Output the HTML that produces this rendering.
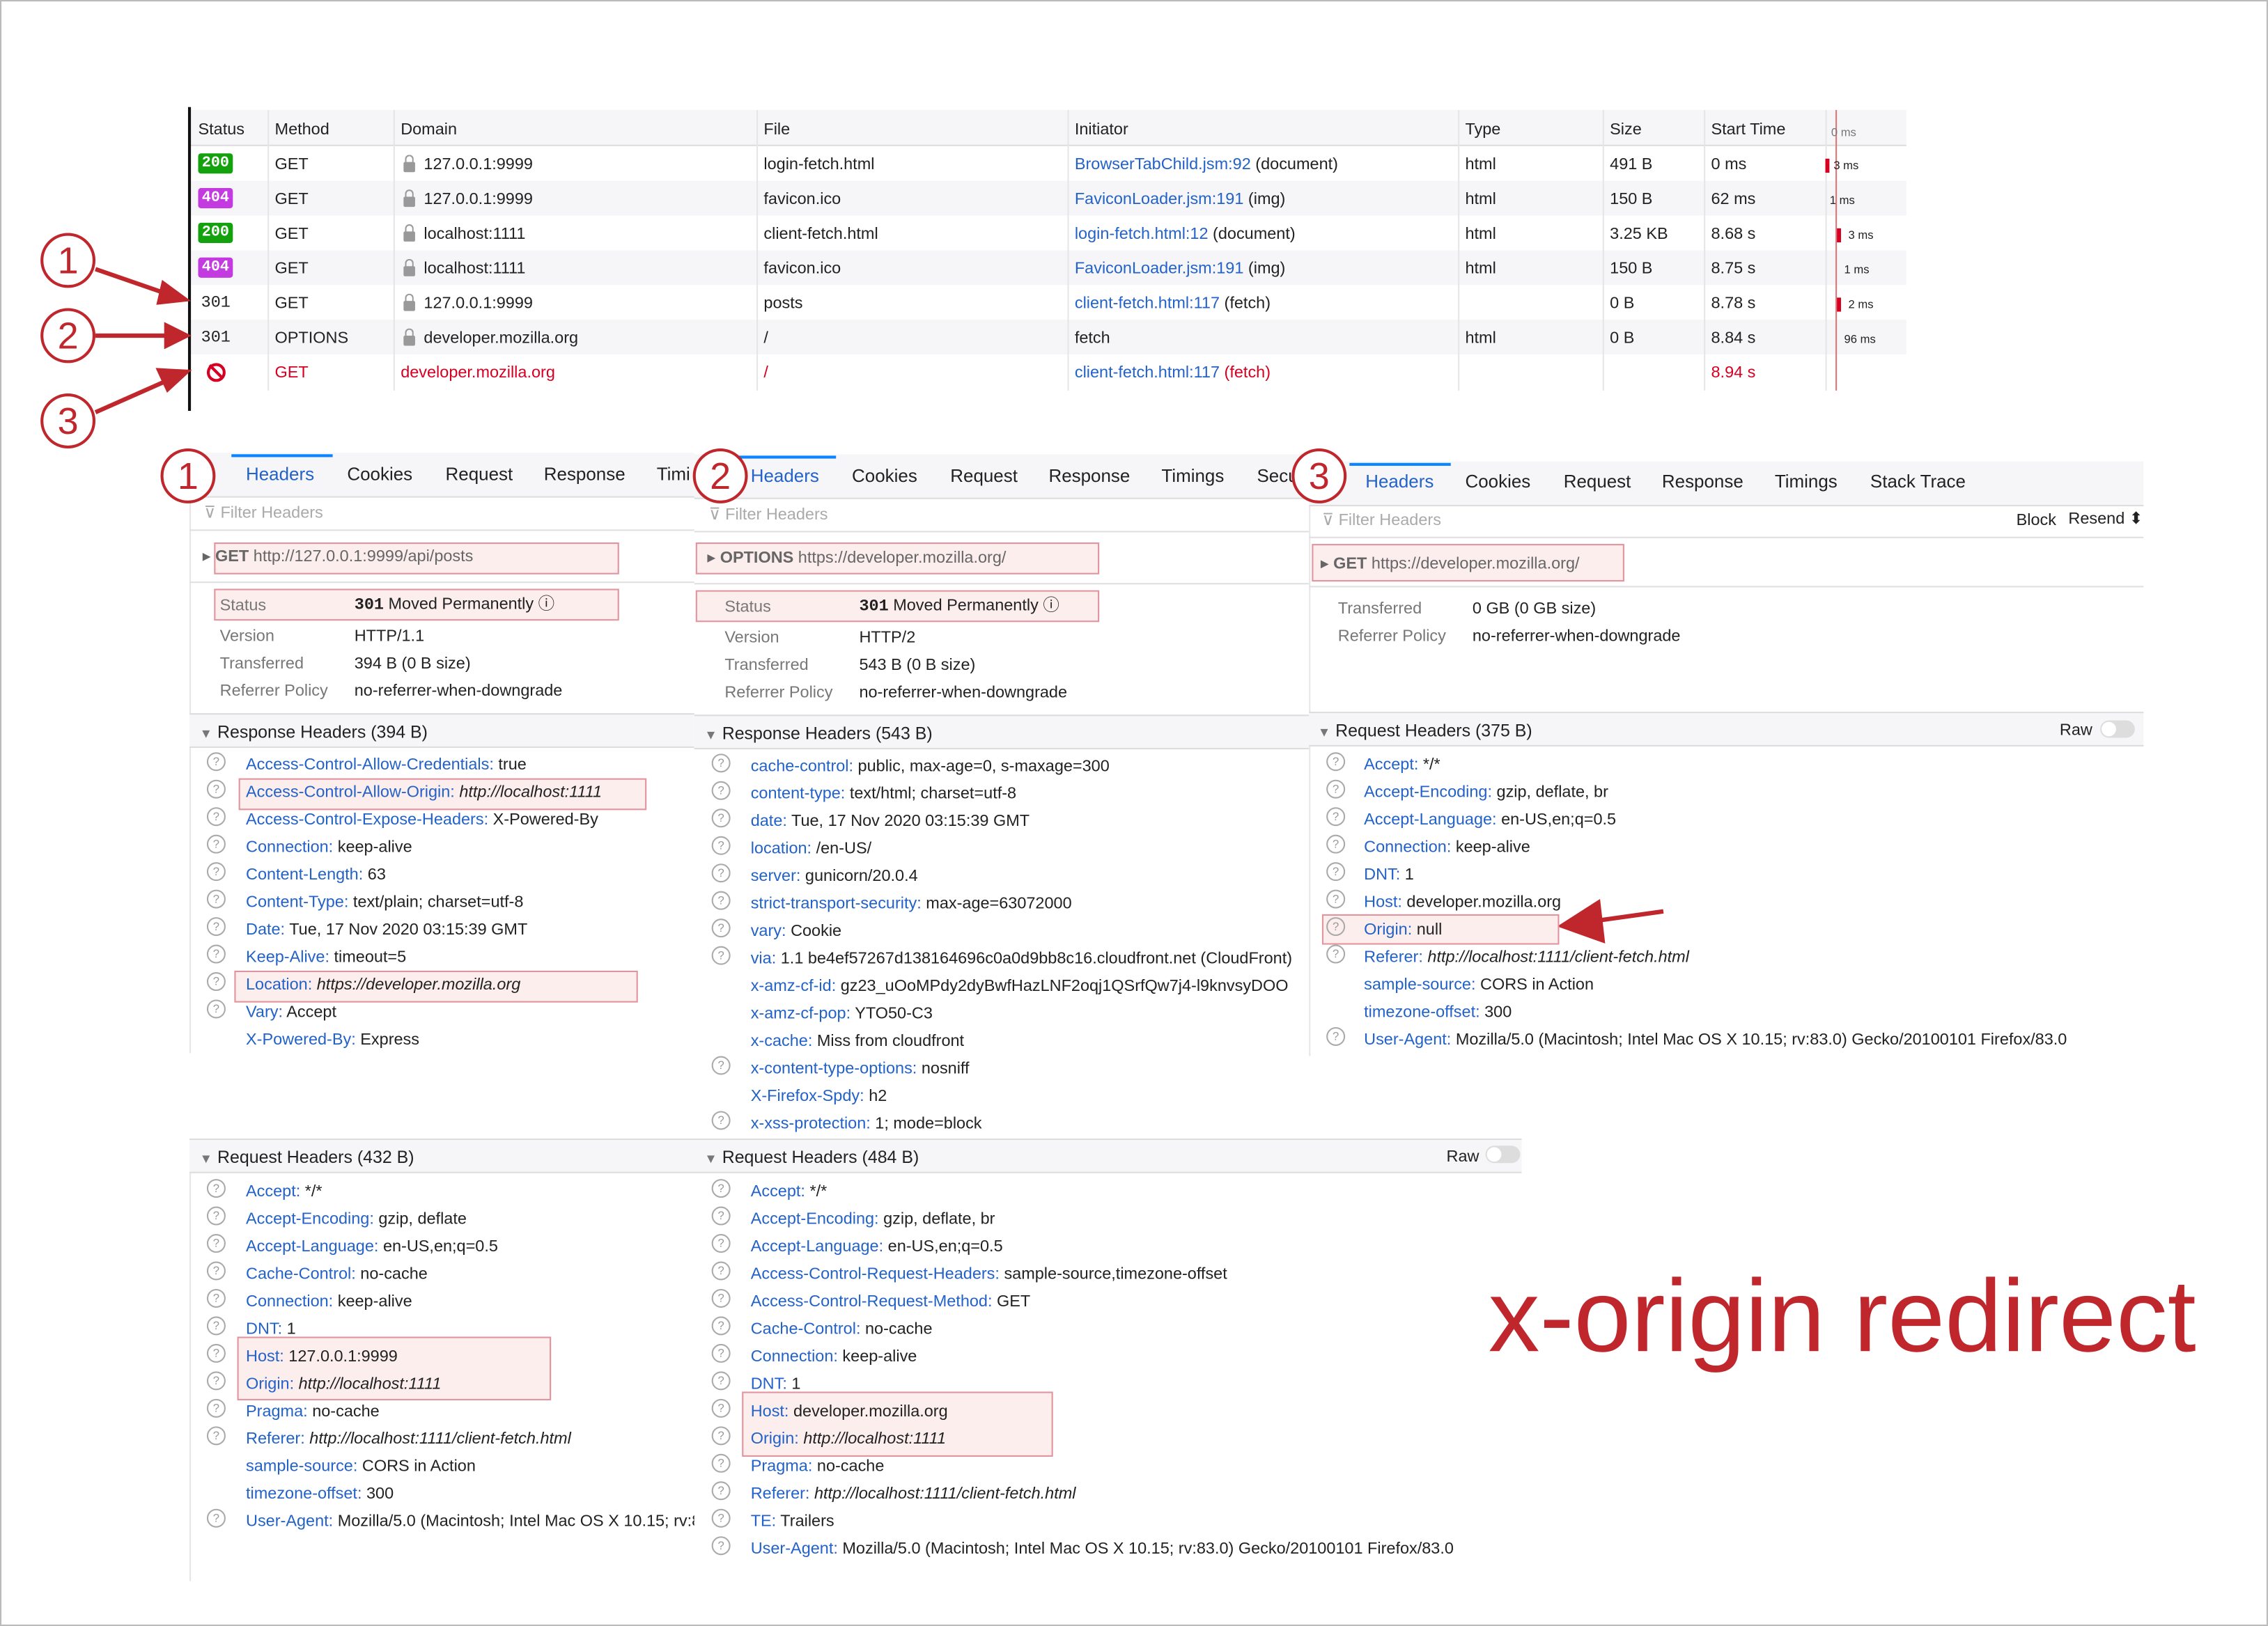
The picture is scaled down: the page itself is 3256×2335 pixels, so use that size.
<!DOCTYPE html>
<html><head><meta charset="utf-8">
<style>
html,body{margin:0;padding:0;background:#fff;overflow:hidden}
#wrap{position:absolute;left:0;top:0;width:1568px;height:1124px;transform-origin:0 0;transform:scale(2.0765,2.0774);font-family:"Liberation Sans",sans-serif;font-size:11.3px;color:#222;}
.t{position:absolute;white-space:nowrap;line-height:14px;margin-top:1px}
.k{color:#2362c8}
.g{color:#777}
.b{position:absolute;background:#fdeeee;border:1px solid #e2939d}
.r{position:absolute;left:131px;width:1187px;height:24px}
.q{position:absolute;width:11px;height:11px;border:1px solid #aaa;border-radius:50%;font-size:8px;line-height:11px;text-align:center;color:#999}
.tab{position:absolute;font-size:12.5px;white-space:nowrap}
.circ{position:absolute;width:34px;height:34px;border:2px solid #c0272d;border-radius:50%;background:#fff;color:#c0272d;font-size:26px;line-height:34px;text-align:center}
.hl{position:absolute;height:1px;background:#e0e0e2}
.vl{position:absolute;width:1px;background:#e6e6e8}
.badge{position:absolute;left:137px;width:24px;height:14px;border-radius:2px;color:#fff;font-family:"Liberation Mono",monospace;font-weight:bold;font-size:10.5px;line-height:14px;text-align:center}
.lock{position:absolute;width:8px;height:7px;background:#999;border-radius:1px}
.lock:before{content:"";position:absolute;left:1px;top:-5px;width:4px;height:5px;border:1px solid #999;border-bottom:none;border-radius:3px 3px 0 0}
</style></head><body><div id="wrap">
<div style="position:absolute;left:0;top:0;width:1566px;height:1122px;border:1px solid #bbb"></div>

<!-- network table -->
<div style="position:absolute;left:131px;top:76px;width:1187px;height:24px;background:#f6f6f8;border-bottom:1px solid #ddd"></div>
<div class="r" style="top:125px;background:#f6f6f8"></div>
<div class="r" style="top:173px;background:#f6f6f8"></div>
<div class="r" style="top:221px;background:#f6f6f8"></div>
<div class="vl" style="left:185px;top:76px;height:194px"></div>
<div class="vl" style="left:272px;top:76px;height:194px"></div>
<div class="vl" style="left:523px;top:76px;height:194px"></div>
<div class="vl" style="left:738px;top:76px;height:194px"></div>
<div class="vl" style="left:1008px;top:76px;height:194px"></div>
<div class="vl" style="left:1108px;top:76px;height:194px"></div>
<div class="vl" style="left:1178px;top:76px;height:194px"></div>
<div class="vl" style="left:1262px;top:76px;height:194px"></div>
<div style="position:absolute;left:1269px;top:76px;width:1px;height:194px;background:#d77"></div>
<div style="position:absolute;left:130px;top:74px;width:2px;height:210px;background:#111"></div>
<div class="t" style="left:137px;top:82px">Status</div><div class="t" style="left:190px;top:82px">Method</div><div class="t" style="left:277px;top:82px">Domain</div><div class="t" style="left:528px;top:82px">File</div><div class="t" style="left:743px;top:82px">Initiator</div><div class="t" style="left:1013px;top:82px">Type</div><div class="t" style="left:1113px;top:82px">Size</div><div class="t" style="left:1183px;top:82px">Start Time</div><div class="t g" style="left:1266px;top:84px;font-size:8px">0 ms</div>

<div class="badge" style="top:106px;background:#13a10e">200</div>
<div class="badge" style="top:130px;background:#c33ae0">404</div>
<div class="badge" style="top:154px;background:#13a10e">200</div>
<div class="badge" style="top:178px;background:#c33ae0">404</div>
<div class="t" style="left:139px;top:202px;font-family:'Liberation Mono',monospace">301</div>
<div class="t" style="left:139px;top:226px;font-family:'Liberation Mono',monospace">301</div>
<div style="position:absolute;left:143px;top:251px;width:9px;height:9px;border:2px solid #d70022;border-radius:50%"></div>
<div style="position:absolute;left:143px;top:256px;width:13px;height:2px;background:#d70022;transform:rotate(45deg)"></div>

<div class="t" style="left:190px;top:106px">GET</div><div class="t" style="left:190px;top:130px">GET</div><div class="t" style="left:190px;top:154px">GET</div><div class="t" style="left:190px;top:178px">GET</div><div class="t" style="left:190px;top:202px">GET</div><div class="t" style="left:190px;top:226px">OPTIONS</div><div class="t" style="left:190px;top:250px;color:#d70022">GET</div>
<div class="lock" style="left:279px;top:112px"></div><div class="lock" style="left:279px;top:136px"></div><div class="lock" style="left:279px;top:160px"></div><div class="lock" style="left:279px;top:184px"></div><div class="lock" style="left:279px;top:208px"></div><div class="lock" style="left:279px;top:232px"></div>
<div class="t" style="left:293px;top:106px">127.0.0.1:9999</div><div class="t" style="left:293px;top:130px">127.0.0.1:9999</div><div class="t" style="left:293px;top:154px">localhost:1111</div><div class="t" style="left:293px;top:178px">localhost:1111</div><div class="t" style="left:293px;top:202px">127.0.0.1:9999</div><div class="t" style="left:293px;top:226px">developer.mozilla.org</div><div class="t" style="left:277px;top:250px;color:#d70022">developer.mozilla.org</div>
<div class="t" style="left:528px;top:106px">login-fetch.html</div><div class="t" style="left:528px;top:130px">favicon.ico</div><div class="t" style="left:528px;top:154px">client-fetch.html</div><div class="t" style="left:528px;top:178px">favicon.ico</div><div class="t" style="left:528px;top:202px">posts</div><div class="t" style="left:528px;top:226px">/</div><div class="t" style="left:528px;top:250px;color:#d70022">/</div>
<div class="t" style="left:743px;top:106px"><span class="k">BrowserTabChild.jsm:92</span> (document)</div><div class="t" style="left:743px;top:130px"><span class="k">FaviconLoader.jsm:191</span> (img)</div><div class="t" style="left:743px;top:154px"><span class="k">login-fetch.html:12</span> (document)</div><div class="t" style="left:743px;top:178px"><span class="k">FaviconLoader.jsm:191</span> (img)</div><div class="t" style="left:743px;top:202px"><span class="k">client-fetch.html:117</span> (fetch)</div><div class="t" style="left:743px;top:226px">fetch</div><div class="t" style="left:743px;top:250px;color:#d70022"><span class="k">client-fetch.html:117</span> (fetch)</div>
<div class="t" style="left:1013px;top:106px">html</div><div class="t" style="left:1013px;top:130px">html</div><div class="t" style="left:1013px;top:154px">html</div><div class="t" style="left:1013px;top:178px">html</div><div class="t" style="left:1013px;top:226px">html</div>
<div class="t" style="left:1113px;top:106px">491 B</div><div class="t" style="left:1113px;top:130px">150 B</div><div class="t" style="left:1113px;top:154px">3.25 KB</div><div class="t" style="left:1113px;top:178px">150 B</div><div class="t" style="left:1113px;top:202px">0 B</div><div class="t" style="left:1113px;top:226px">0 B</div>
<div class="t" style="left:1183px;top:106px">0 ms</div><div class="t" style="left:1183px;top:130px">62 ms</div><div class="t" style="left:1183px;top:154px">8.68 s</div><div class="t" style="left:1183px;top:178px">8.75 s</div><div class="t" style="left:1183px;top:202px">8.78 s</div><div class="t" style="left:1183px;top:226px">8.84 s</div><div class="t" style="left:1183px;top:250px;color:#d70022">8.94 s</div>
<div class="t" style="left:1262px;top:107px;font-size:8px"><span style="color:#d70022">▌</span>3 ms</div><div class="t" style="left:1265px;top:131px;font-size:8px">1 ms</div><div class="t" style="left:1270px;top:155px;font-size:8px"><span style="color:#d70022">▌</span> 3 ms</div><div class="t" style="left:1275px;top:179px;font-size:8px">1 ms</div><div class="t" style="left:1270px;top:203px;font-size:8px"><span style="color:#d70022">▌</span> 2 ms</div><div class="t" style="left:1275px;top:227px;font-size:8px">96 ms</div>

<!-- annotation circles + arrows -->
<svg style="position:absolute;left:0;top:0" width="1568" height="1124">
<g stroke="#c0272d" stroke-width="3" fill="#c0272d">
<line x1="66" y1="186" x2="118" y2="204"/><polygon points="128,207 113,196 110,209"/>
<line x1="66" y1="232" x2="116" y2="232"/><polygon points="129,232 115,225 115,239"/>
<line x1="66" y1="285" x2="118" y2="262"/><polygon points="129,257 110,256 116,269"/>
<line x1="1150" y1="630" x2="1100" y2="637"/><polygon points="1080,640 1105,624 1108,650"/>
</g></svg>
<div class="circ" style="left:28px;top:161px">1</div>
<div class="circ" style="left:28px;top:213px">2</div>
<div class="circ" style="left:28px;top:272px">3</div>

<!-- panel backgrounds -->
<div style="position:absolute;left:131px;top:313px;width:349px;height:30px;background:#f6f6f8;border-bottom:1px solid #ddd"></div>
<div style="position:absolute;left:480px;top:314px;width:425px;height:30px;background:#f6f6f8;border-bottom:1px solid #ddd"></div>
<div style="position:absolute;left:905px;top:319px;width:577px;height:30px;background:#f6f6f8;border-bottom:1px solid #ddd"></div>
<div style="position:absolute;left:160px;top:314px;width:70px;height:2px;background:#0a84ff"></div>
<div style="position:absolute;left:510px;top:315px;width:68px;height:2px;background:#0a84ff"></div>
<div style="position:absolute;left:933px;top:320px;width:70px;height:2px;background:#0a84ff"></div>
<div class="vl" style="left:131px;top:313px;height:415px"></div>
<div class="vl" style="left:905px;top:350px;height:380px"></div>
<div class="vl" style="left:131px;top:788px;height:305px"></div>

<div class="tab k" style="left:170px;top:321px">Headers</div><div class="tab" style="left:240px;top:321px">Cookies</div><div class="tab" style="left:308px;top:321px">Request</div><div class="tab" style="left:376px;top:321px">Response</div><div class="tab" style="left:454px;top:321px">Timi</div>
<div class="tab k" style="left:519px;top:322px">Headers</div><div class="tab" style="left:589px;top:322px">Cookies</div><div class="tab" style="left:657px;top:322px">Request</div><div class="tab" style="left:725px;top:322px">Response</div><div class="tab" style="left:803px;top:322px">Timings</div><div class="tab" style="left:869px;top:322px">Secu</div>
<div class="tab k" style="left:944px;top:326px">Headers</div><div class="tab" style="left:1013px;top:326px">Cookies</div><div class="tab" style="left:1081px;top:326px">Request</div><div class="tab" style="left:1149px;top:326px">Response</div><div class="tab" style="left:1227px;top:326px">Timings</div><div class="tab" style="left:1293px;top:326px">Stack Trace</div>
<div class="circ" style="left:111px;top:310px">1</div>
<div class="circ" style="left:479px;top:310px">2</div>
<div class="circ" style="left:893px;top:310px">3</div>

<div class="t g" style="left:141px;top:347px;color:#aaa">⊽ Filter Headers</div>
<div class="t g" style="left:490px;top:348px;color:#aaa">⊽ Filter Headers</div>
<div class="t g" style="left:914px;top:352px;color:#aaa">⊽ Filter Headers</div>
<div class="t" style="left:1394px;top:352px">Block</div><div class="t" style="left:1430px;top:351px">Resend ⬍</div>
<div class="hl" style="left:131px;top:366px;width:349px"></div><div class="hl" style="left:480px;top:367px;width:425px"></div><div class="hl" style="left:905px;top:371px;width:577px"></div>

<!-- panel 1 summary -->
<div class="b" style="left:148px;top:375px;width:278px;height:20px"></div>
<div class="t" style="left:140px;top:377px;color:#666">▸ <b>GET</b> <span>http://127.0.0.1:9999/api/posts</span></div>
<div class="hl" style="left:131px;top:402px;width:349px"></div>
<div class="b" style="left:148px;top:407px;width:278px;height:20px"></div>
<div class="t g" style="left:152px;top:411px">Status</div><div class="t" style="left:245px;top:410px"><b style="font-family:'Liberation Mono',monospace">301</b> Moved Permanently ⓘ</div>
<div class="t g" style="left:152px;top:432px">Version</div><div class="t" style="left:245px;top:432px">HTTP/1.1</div>
<div class="t g" style="left:152px;top:451px">Transferred</div><div class="t" style="left:245px;top:451px">394 B (0 B size)</div>
<div class="t g" style="left:152px;top:470px">Referrer Policy</div><div class="t" style="left:245px;top:470px">no-referrer-when-downgrade</div>
<div style="position:absolute;left:131px;top:493px;width:349px;height:22px;background:#f6f6f8;border-top:1px solid #ddd;border-bottom:1px solid #ddd"></div>
<div class="t" style="left:138px;top:498px;font-size:12px"><span style="color:#777;font-size:9px">▼</span> Response Headers (394 B)</div>

<!-- panel 2 summary -->
<div class="b" style="left:481px;top:375px;width:277px;height:20px"></div>
<div class="t" style="left:489px;top:378px;color:#666">▸ <b>OPTIONS</b> https://developer.mozilla.org/</div>
<div class="hl" style="left:480px;top:403px;width:425px"></div>
<div class="b" style="left:481px;top:408px;width:277px;height:20px"></div>
<div class="t g" style="left:501px;top:412px">Status</div><div class="t" style="left:594px;top:411px"><b style="font-family:'Liberation Mono',monospace">301</b> Moved Permanently ⓘ</div>
<div class="t g" style="left:501px;top:433px">Version</div><div class="t" style="left:594px;top:433px">HTTP/2</div>
<div class="t g" style="left:501px;top:452px">Transferred</div><div class="t" style="left:594px;top:452px">543 B (0 B size)</div>
<div class="t g" style="left:501px;top:471px">Referrer Policy</div><div class="t" style="left:594px;top:471px">no-referrer-when-downgrade</div>
<div style="position:absolute;left:480px;top:494px;width:425px;height:22px;background:#f6f6f8;border-top:1px solid #ddd;border-bottom:1px solid #ddd"></div>
<div class="t" style="left:487px;top:499px;font-size:12px"><span style="color:#777;font-size:9px">▼</span> Response Headers (543 B)</div>

<!-- panel 3 summary -->
<div class="b" style="left:907px;top:376px;width:214px;height:24px"></div>
<div class="t" style="left:913px;top:382px;color:#666">▸ <b>GET</b> https://developer.mozilla.org/</div>
<div class="hl" style="left:905px;top:405px;width:577px"></div>
<div class="t g" style="left:925px;top:413px">Transferred</div><div class="t" style="left:1018px;top:413px">0 GB (0 GB size)</div>
<div class="t g" style="left:925px;top:432px">Referrer Policy</div><div class="t" style="left:1018px;top:432px">no-referrer-when-downgrade</div>
<div style="position:absolute;left:905px;top:492px;width:577px;height:22px;background:#f6f6f8;border-top:1px solid #ddd;border-bottom:1px solid #ddd"></div>
<div class="t" style="left:911px;top:497px;font-size:12px"><span style="color:#777;font-size:9px">▼</span> Request Headers (375 B)</div>
<div class="t" style="left:1424px;top:497px">Raw</div><div style="position:absolute;left:1452px;top:498px;width:24px;height:12px;border-radius:6px;background:#ddd"></div><div style="position:absolute;left:1453px;top:499px;width:10px;height:10px;border-radius:5px;background:#fff"></div>

<!-- panel 1 response headers -->
<div class="b" style="left:165px;top:538px;width:280px;height:20px"></div>
<div class="b" style="left:162px;top:671px;width:277px;height:20px"></div>
<div class="q" style="left:143px;top:520px">?</div><div class="t" style="left:170px;top:521px"><span class="k">Access-Control-Allow-Credentials:</span> true</div>
<div class="q" style="left:143px;top:539px">?</div><div class="t" style="left:170px;top:540px"><span class="k">Access-Control-Allow-Origin:</span> <i>http://localhost:1111</i></div>
<div class="q" style="left:143px;top:558px">?</div><div class="t" style="left:170px;top:559px"><span class="k">Access-Control-Expose-Headers:</span> X-Powered-By</div>
<div class="q" style="left:143px;top:577px">?</div><div class="t" style="left:170px;top:578px"><span class="k">Connection:</span> keep-alive</div>
<div class="q" style="left:143px;top:596px">?</div><div class="t" style="left:170px;top:597px"><span class="k">Content-Length:</span> 63</div>
<div class="q" style="left:143px;top:615px">?</div><div class="t" style="left:170px;top:616px"><span class="k">Content-Type:</span> text/plain; charset=utf-8</div>
<div class="q" style="left:143px;top:634px">?</div><div class="t" style="left:170px;top:635px"><span class="k">Date:</span> Tue, 17 Nov 2020 03:15:39 GMT</div>
<div class="q" style="left:143px;top:653px">?</div><div class="t" style="left:170px;top:654px"><span class="k">Keep-Alive:</span> timeout=5</div>
<div class="q" style="left:143px;top:672px">?</div><div class="t" style="left:170px;top:673px"><span class="k">Location:</span> <i>https://developer.mozilla.org</i></div>
<div class="q" style="left:143px;top:691px">?</div><div class="t" style="left:170px;top:692px"><span class="k">Vary:</span> Accept</div>
<div class="t" style="left:170px;top:711px"><span class="k">X-Powered-By:</span> Express</div>

<!-- panel 2 response headers -->
<div style="position:absolute;left:480px;top:516px;width:425px;height:270px;overflow:hidden">
<div class="q" style="left:12px;top:5px">?</div><div class="t" style="left:39px;top:6px"><span class="k">cache-control:</span> public, max-age=0, s-maxage=300</div>
<div class="q" style="left:12px;top:24px">?</div><div class="t" style="left:39px;top:25px"><span class="k">content-type:</span> text/html; charset=utf-8</div>
<div class="q" style="left:12px;top:43px">?</div><div class="t" style="left:39px;top:44px"><span class="k">date:</span> Tue, 17 Nov 2020 03:15:39 GMT</div>
<div class="q" style="left:12px;top:62px">?</div><div class="t" style="left:39px;top:63px"><span class="k">location:</span> /en-US/</div>
<div class="q" style="left:12px;top:81px">?</div><div class="t" style="left:39px;top:82px"><span class="k">server:</span> gunicorn/20.0.4</div>
<div class="q" style="left:12px;top:100px">?</div><div class="t" style="left:39px;top:101px"><span class="k">strict-transport-security:</span> max-age=63072000</div>
<div class="q" style="left:12px;top:119px">?</div><div class="t" style="left:39px;top:120px"><span class="k">vary:</span> Cookie</div>
<div class="q" style="left:12px;top:138px">?</div><div class="t" style="left:39px;top:139px"><span class="k">via:</span> 1.1 be4ef57267d138164696c0a0d9bb8c16.cloudfront.net (CloudFront)</div>
<div class="t" style="left:39px;top:158px"><span class="k">x-amz-cf-id:</span> gz23_uOoMPdy2dyBwfHazLNF2oqj1QSrfQw7j4-l9knvsyDOO</div>
<div class="t" style="left:39px;top:177px"><span class="k">x-amz-cf-pop:</span> YTO50-C3</div>
<div class="t" style="left:39px;top:196px"><span class="k">x-cache:</span> Miss from cloudfront</div>
<div class="q" style="left:12px;top:214px">?</div><div class="t" style="left:39px;top:215px"><span class="k">x-content-type-options:</span> nosniff</div>
<div class="t" style="left:39px;top:234px"><span class="k">X-Firefox-Spdy:</span> h2</div>
<div class="q" style="left:12px;top:252px">?</div><div class="t" style="left:39px;top:253px"><span class="k">x-xss-protection:</span> 1; mode=block</div>
</div>

<!-- panel 3 request headers -->
<div class="b" style="left:914px;top:632px;width:162px;height:19px"></div>
<div class="q" style="left:917px;top:520px">?</div><div class="t" style="left:943px;top:521px"><span class="k">Accept:</span> */*</div>
<div class="q" style="left:917px;top:539px">?</div><div class="t" style="left:943px;top:540px"><span class="k">Accept-Encoding:</span> gzip, deflate, br</div>
<div class="q" style="left:917px;top:558px">?</div><div class="t" style="left:943px;top:559px"><span class="k">Accept-Language:</span> en-US,en;q=0.5</div>
<div class="q" style="left:917px;top:577px">?</div><div class="t" style="left:943px;top:578px"><span class="k">Connection:</span> keep-alive</div>
<div class="q" style="left:917px;top:596px">?</div><div class="t" style="left:943px;top:597px"><span class="k">DNT:</span> 1</div>
<div class="q" style="left:917px;top:615px">?</div><div class="t" style="left:943px;top:616px"><span class="k">Host:</span> developer.mozilla.org</div>
<div class="q" style="left:917px;top:634px">?</div><div class="t" style="left:943px;top:635px"><span class="k">Origin:</span> null</div>
<div class="q" style="left:917px;top:653px">?</div><div class="t" style="left:943px;top:654px"><span class="k">Referer:</span> <i>http://localhost:1111/client-fetch.html</i></div>
<div class="t" style="left:943px;top:673px"><span class="k">sample-source:</span> CORS in Action</div>
<div class="t" style="left:943px;top:692px"><span class="k">timezone-offset:</span> 300</div>
<div class="q" style="left:917px;top:710px">?</div><div class="t" style="left:943px;top:711px"><span class="k">User-Agent:</span> Mozilla/5.0 (Macintosh; Intel Mac OS X 10.15; rv:83.0) Gecko/20100101 Firefox/83.0</div>

<!-- bottom request headers -->
<div style="position:absolute;left:131px;top:787px;width:921px;height:22px;background:#f6f6f8;border-top:1px solid #ddd;border-bottom:1px solid #ddd"></div>
<div class="t" style="left:138px;top:792px;font-size:12px"><span style="color:#777;font-size:9px">▼</span> Request Headers (432 B)</div>
<div class="t" style="left:487px;top:792px;font-size:12px"><span style="color:#777;font-size:9px">▼</span> Request Headers (484 B)</div>
<div class="t" style="left:1000px;top:792px">Raw</div><div style="position:absolute;left:1027px;top:792px;width:24px;height:12px;border-radius:6px;background:#ddd"></div><div style="position:absolute;left:1028px;top:793px;width:10px;height:10px;border-radius:5px;background:#fff"></div>

<div class="b" style="left:164px;top:924px;width:215px;height:42px"></div>
<div style="position:absolute;left:131px;top:810px;width:349px;height:260px;overflow:hidden">
<div class="q" style="left:12px;top:5px">?</div><div class="t" style="left:39px;top:6px"><span class="k">Accept:</span> */*</div>
<div class="q" style="left:12px;top:24px">?</div><div class="t" style="left:39px;top:25px"><span class="k">Accept-Encoding:</span> gzip, deflate</div>
<div class="q" style="left:12px;top:43px">?</div><div class="t" style="left:39px;top:44px"><span class="k">Accept-Language:</span> en-US,en;q=0.5</div>
<div class="q" style="left:12px;top:62px">?</div><div class="t" style="left:39px;top:63px"><span class="k">Cache-Control:</span> no-cache</div>
<div class="q" style="left:12px;top:81px">?</div><div class="t" style="left:39px;top:82px"><span class="k">Connection:</span> keep-alive</div>
<div class="q" style="left:12px;top:100px">?</div><div class="t" style="left:39px;top:101px"><span class="k">DNT:</span> 1</div>
<div class="q" style="left:12px;top:119px">?</div><div class="t" style="left:39px;top:120px"><span class="k">Host:</span> 127.0.0.1:9999</div>
<div class="q" style="left:12px;top:138px">?</div><div class="t" style="left:39px;top:139px"><span class="k">Origin:</span> <i>http://localhost:1111</i></div>
<div class="q" style="left:12px;top:157px">?</div><div class="t" style="left:39px;top:158px"><span class="k">Pragma:</span> no-cache</div>
<div class="q" style="left:12px;top:176px">?</div><div class="t" style="left:39px;top:177px"><span class="k">Referer:</span> <i>http://localhost:1111/client-fetch.html</i></div>
<div class="t" style="left:39px;top:196px"><span class="k">sample-source:</span> CORS in Action</div>
<div class="t" style="left:39px;top:215px"><span class="k">timezone-offset:</span> 300</div>
<div class="q" style="left:12px;top:233px">?</div><div class="t" style="left:39px;top:234px"><span class="k">User-Agent:</span> Mozilla/5.0 (Macintosh; Intel Mac OS X 10.15; rv:83.0)</div>
</div>

<div class="b" style="left:513px;top:962px;width:213px;height:43px"></div>
<div style="position:absolute;left:480px;top:810px;width:600px;height:275px">
<div class="q" style="left:12px;top:5px">?</div><div class="t" style="left:39px;top:6px"><span class="k">Accept:</span> */*</div>
<div class="q" style="left:12px;top:24px">?</div><div class="t" style="left:39px;top:25px"><span class="k">Accept-Encoding:</span> gzip, deflate, br</div>
<div class="q" style="left:12px;top:43px">?</div><div class="t" style="left:39px;top:44px"><span class="k">Accept-Language:</span> en-US,en;q=0.5</div>
<div class="q" style="left:12px;top:62px">?</div><div class="t" style="left:39px;top:63px"><span class="k">Access-Control-Request-Headers:</span> sample-source,timezone-offset</div>
<div class="q" style="left:12px;top:81px">?</div><div class="t" style="left:39px;top:82px"><span class="k">Access-Control-Request-Method:</span> GET</div>
<div class="q" style="left:12px;top:100px">?</div><div class="t" style="left:39px;top:101px"><span class="k">Cache-Control:</span> no-cache</div>
<div class="q" style="left:12px;top:119px">?</div><div class="t" style="left:39px;top:120px"><span class="k">Connection:</span> keep-alive</div>
<div class="q" style="left:12px;top:138px">?</div><div class="t" style="left:39px;top:139px"><span class="k">DNT:</span> 1</div>
<div class="q" style="left:12px;top:157px">?</div><div class="t" style="left:39px;top:158px"><span class="k">Host:</span> developer.mozilla.org</div>
<div class="q" style="left:12px;top:176px">?</div><div class="t" style="left:39px;top:177px"><span class="k">Origin:</span> <i>http://localhost:1111</i></div>
<div class="q" style="left:12px;top:195px">?</div><div class="t" style="left:39px;top:196px"><span class="k">Pragma:</span> no-cache</div>
<div class="q" style="left:12px;top:214px">?</div><div class="t" style="left:39px;top:215px"><span class="k">Referer:</span> <i>http://localhost:1111/client-fetch.html</i></div>
<div class="q" style="left:12px;top:233px">?</div><div class="t" style="left:39px;top:234px"><span class="k">TE:</span> Trailers</div>
<div class="q" style="left:12px;top:252px">?</div><div class="t" style="left:39px;top:253px"><span class="k">User-Agent:</span> Mozilla/5.0 (Macintosh; Intel Mac OS X 10.15; rv:83.0) Gecko/20100101 Firefox/83.0</div>
</div>

<div class="t" style="left:1029px;top:872px;font-size:71px;line-height:76px;color:#c0272d">x-origin redirect</div>
</div></body></html>
